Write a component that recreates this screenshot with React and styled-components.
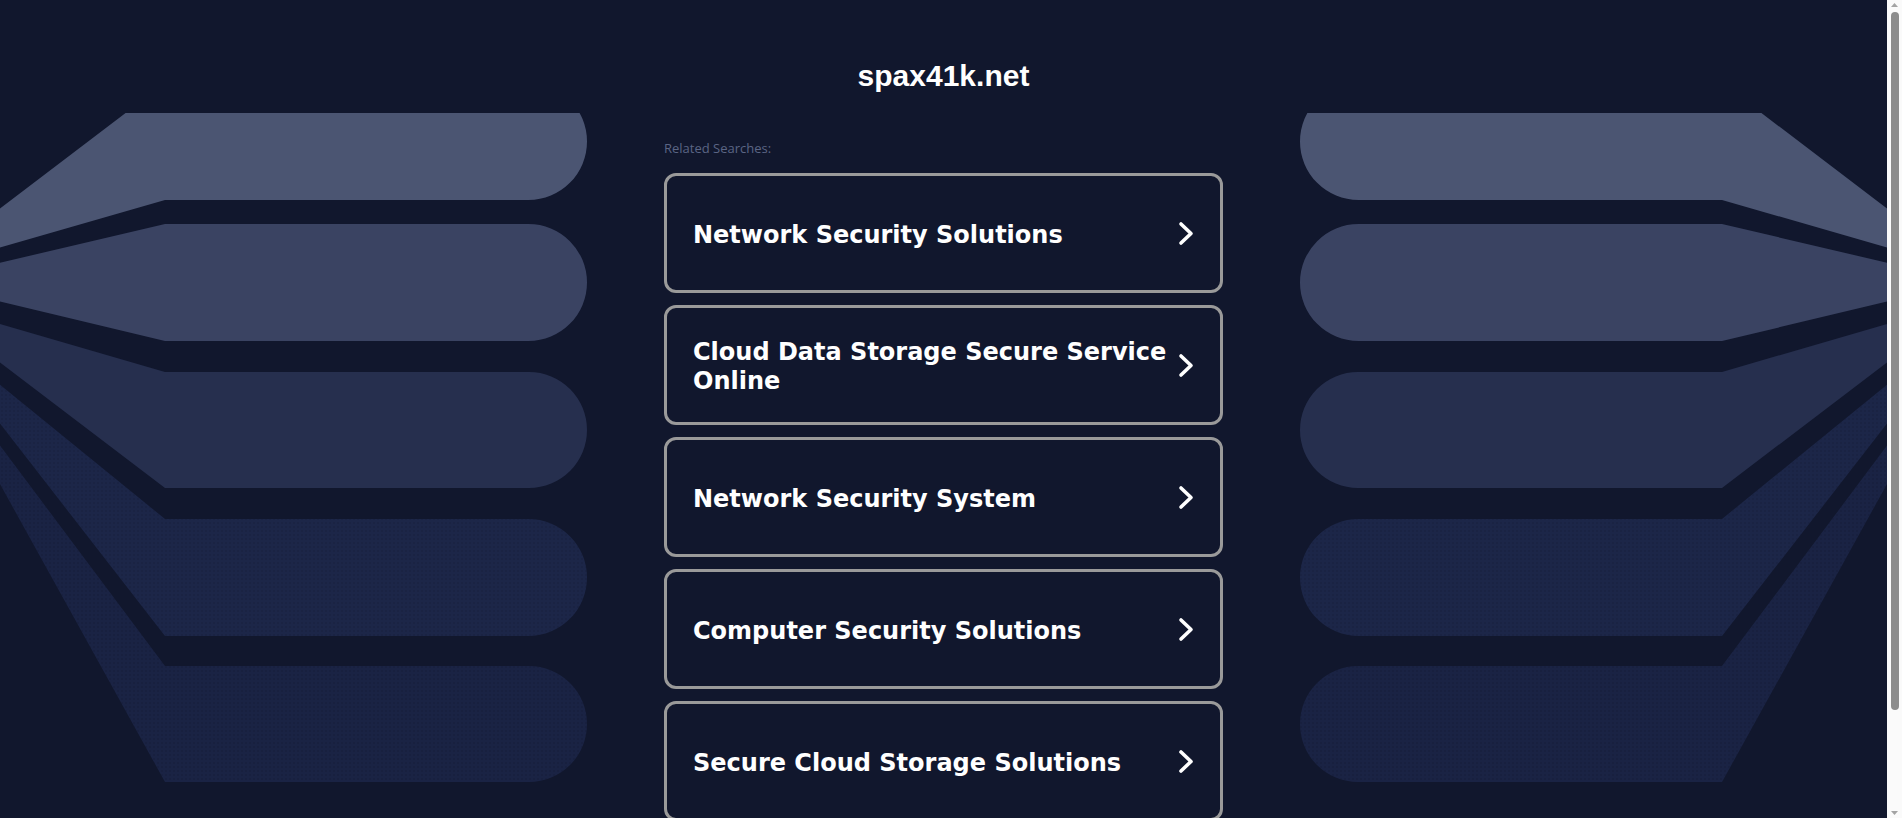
import React from 'react';
import styled, { createGlobalStyle } from 'styled-components';

const colors = {
  page: '#11172d',
  border: '#9a9a9a',
  label: '#5b6584',
  white: '#ffffff',
  track: '#fafafa',
  thumb: '#8c8c8c',
};

// left fan of bars, the right side is the same drawing mirrored
const bars = [
  { top: -30, bottom: 87, apex: 158, fill: '#4b5572' },
  { top: 111, bottom: 228, apex: 169, fill: '#3a4362' },
  { top: 259, bottom: 375, apex: 187, fill: '#262f4e' },
  { top: 406, bottom: 523, apex: 205, fill: 'url(#dots-a)' },
  { top: 553, bottom: 669, apex: 223, fill: 'url(#dots-b)' },
];

const searches = [
  'Network Security Solutions',
  'Cloud Data Storage Secure Service Online',
  'Network Security System',
  'Computer Security Solutions',
  'Secure Cloud Storage Solutions',
];

const GlobalStyle = createGlobalStyle`
  html, body {
    margin: 0;
    padding: 0;
    background: ${colors.page};
  }

  body {
    font-family: "DejaVu Sans", Verdana, sans-serif;
  }
`;

const Page = styled.div`
  display: flex;
  align-items: flex-start;
`;

const Content = styled.div`
  flex: 1;
  min-width: 0;
  min-height: 982px;
`;

const Header = styled.header`
  padding: 58px 0 19px;
  text-align: center;
`;

const Domain = styled.h1`
  margin: 0;
  font: bold 30px/36px 'Liberation Sans', Arial, sans-serif;
  color: ${colors.white};
`;

const Stage = styled.div`
  display: grid;
  grid-template-columns: 1fr 559px 1fr;
  align-items: start;
`;

const Fan = styled.svg`
  display: block;
  width: 100%;
  height: 670px;
  transform: ${({ $flip }) => ($flip ? 'scaleX(-1)' : 'none')};
`;

const Results = styled.main`
  padding: 27px 0 160px;
`;

const Label = styled.p`
  margin: 0 0 16px;
  font: 13px/17px 'Open Sans', sans-serif;
  color: ${colors.label};
`;

const List = styled.div`
  display: flex;
  flex-direction: column;
  gap: 12px;
`;

const Card = styled.a`
  display: flex;
  align-items: center;
  justify-content: space-between;
  gap: 6px;
  height: 120px;
  box-sizing: border-box;
  padding: 4px 26px 0;
  border: 3px solid ${colors.border};
  border-radius: 12px;
  color: ${colors.white};
  text-decoration: none;
  cursor: pointer;
`;

const CardText = styled.span`
  flex: 1;
  font: bold 24px/29px 'DejaVu Sans', Verdana, sans-serif;
`;

const Chevron = styled.svg`
  flex-shrink: 0;
  width: 16px;
  height: 25px;
  margin-top: -4px;
`;

const ScrollTrack = styled.aside`
  position: sticky;
  top: 0;
  flex-shrink: 0;
  width: 15px;
  height: 100vh;
  box-sizing: border-box;
  padding: 2px 0;
  display: flex;
  flex-direction: column;
  align-items: center;
  background: ${colors.track};
`;

const ScrollArrow = styled.svg`
  width: 9px;
  height: 6px;
  flex-shrink: 0;
  transform: ${({ $down }) => ($down ? 'rotate(180deg)' : 'none')};
`;

const ScrollThumb = styled.div`
  width: 8px;
  height: 698px;
  margin: 4px 0 auto 1px;
  border-radius: 4px;
  background: ${colors.thumb};
`;

const BarFan = ({ flip }) => (
  <Fan $flip={flip}>
    <defs>
      <pattern id="dots-a" width="4" height="4" patternUnits="userSpaceOnUse">
        <rect width="4" height="4" fill="#1c2648" />
        <circle cx="2" cy="2" r="0.7" fill="#151d3a" />
      </pattern>
      <pattern id="dots-b" width="4" height="4" patternUnits="userSpaceOnUse">
        <rect width="4" height="4" fill="#1a2344" />
        <circle cx="2" cy="2" r="0.7" fill="#131b36" />
      </pattern>
    </defs>
    {bars.map(({ top, bottom, apex, fill }) => {
      const r = (bottom - top) / 2;
      return (
        <path
          key={top}
          fill={fill}
          d={`M -82 ${apex} L 165 ${top} L ${587 - r} ${top} A ${r} ${r} 0 0 1 ${587 - r} ${bottom} L 165 ${bottom} Z`}
        />
      );
    })}
  </Fan>
);

const Arrow = ({ down }) => (
  <ScrollArrow $down={down} viewBox="0 0 9 6">
    <polygon points="4.5,1 8,5 1,5" fill="#a3a3a3" />
  </ScrollArrow>
);

const App = () => (
  <Page>
    <GlobalStyle />
    <Content>
      <Header>
        <Domain>spax41k.net</Domain>
      </Header>
      <Stage>
        <BarFan />
        <Results>
          <Label>Related Searches:</Label>
          <List>
            {searches.map((term) => (
              <Card key={term}>
                <CardText>{term}</CardText>
                <Chevron viewBox="0 0 16 25">
                  <polyline
                    points="3,3 13,12.5 3,22"
                    fill="none"
                    stroke={colors.white}
                    strokeWidth="3.6"
                    strokeLinecap="round"
                    strokeLinejoin="round"
                  />
                </Chevron>
              </Card>
            ))}
          </List>
        </Results>
        <BarFan flip />
      </Stage>
    </Content>
    <ScrollTrack>
      <Arrow />
      <ScrollThumb />
      <Arrow down />
    </ScrollTrack>
  </Page>
);

export default App;
